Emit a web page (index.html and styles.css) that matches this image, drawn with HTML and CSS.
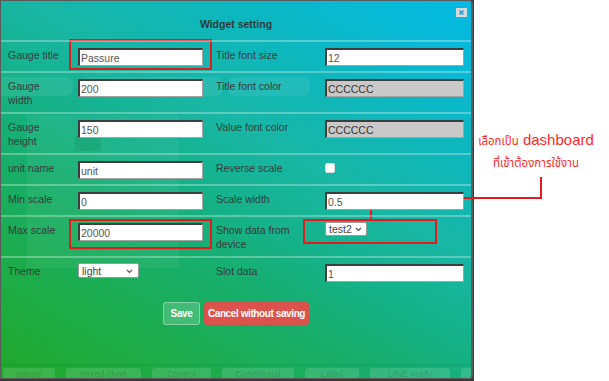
FILE: index.html
```html
<!DOCTYPE html>
<html lang="en">
<head>
    <meta charset="UTF-8">
    <meta name="viewport" content="width=device-width, initial-scale=1.0">
    <title>Widget setting</title>
    <link rel="stylesheet" href="styles.css">
</head>
<body>

<div class="page">

    <div class="shot">
        <div class="dialog">

            <!-- dashboard behind the modal, seen through it -->
            <div class="ghosts">
                <span class="g-pill g1"></span>
                <span class="g-pill g2"></span>
                <span class="g-pill g3"></span>
                <div class="g-panel">
                    <span class="g-del"></span>
                </div>
                <div class="g-bar">
                    <span class="g-btn" style="width:52px">gauge</span>
                    <span class="g-btn" style="width:75px">mixed chart</span>
                    <span class="g-btn" style="width:59px">Control</span>
                    <span class="g-btn" style="width:72px">Conditional</span>
                    <span class="g-btn" style="width:54px">Label</span>
                    <span class="g-btn" style="width:80px">LINE notify</span>
                    <span class="g-btn" style="width:40px"></span>
                </div>
            </div>

            <div class="content">
                <div class="dlg-head">
                    Widget setting
                    <span class="close">
                        <svg width="11" height="9" viewBox="0 0 11 9">
                            <path d="M3.5 2.5 L7.5 6.5 M7.5 2.5 L3.5 6.5" stroke="#2a9bd6" stroke-width="1.6"/>
                        </svg>
                    </span>
                </div>

                <div class="row">
                    <div class="lbl">Gauge title</div>
                    <div class="cell"><input class="txt short" value="Passure"></div>
                    <div class="lbl">Title font size</div>
                    <div class="cell"><input class="txt long" value="12"></div>
                </div>
                <div class="row">
                    <div class="lbl">Gauge width</div>
                    <div class="cell"><input class="txt short" value="200"></div>
                    <div class="lbl">Title font color</div>
                    <div class="cell"><input class="txt long grey" value="CCCCCC"></div>
                </div>
                <div class="row">
                    <div class="lbl">Gauge height</div>
                    <div class="cell"><input class="txt short" value="150"></div>
                    <div class="lbl">Value font color</div>
                    <div class="cell"><input class="txt long grey" value="CCCCCC"></div>
                </div>
                <div class="row">
                    <div class="lbl">unit name</div>
                    <div class="cell"><input class="txt short" value="unit"></div>
                    <div class="lbl">Reverse scale</div>
                    <div class="cell"><input type="checkbox" class="chk"></div>
                </div>
                <div class="row">
                    <div class="lbl">Min scale</div>
                    <div class="cell"><input class="txt short" value="0"></div>
                    <div class="lbl">Scale width</div>
                    <div class="cell"><input class="txt long" value="0.5"></div>
                </div>
                <div class="row">
                    <div class="lbl">Max scale</div>
                    <div class="cell"><input class="txt short" value="20000"></div>
                    <div class="lbl">Show data from device</div>
                    <div class="cell">
                        <span class="sel-wrap device">
                            <select class="sel"><option>test2</option></select>
                            <svg class="chev" width="7" height="5" viewBox="0 0 7 5"><path d="M1 1 L3.5 3.5 L6 1" fill="none" stroke="#555" stroke-width="1.2"/></svg>
                        </span>
                    </div>
                </div>
                <div class="row">
                    <div class="lbl">Theme</div>
                    <div class="cell">
                        <span class="sel-wrap theme">
                            <select class="sel"><option>light</option></select>
                            <svg class="chev" width="7" height="5" viewBox="0 0 7 5"><path d="M1 1 L3.5 3.5 L6 1" fill="none" stroke="#555" stroke-width="1.2"/></svg>
                        </span>
                    </div>
                    <div class="lbl">Slot data</div>
                    <div class="cell"><input class="txt long" value="1"></div>
                </div>

                <div class="actions">
                    <button class="btn save">Save</button>
                    <button class="btn cancel">Cancel without saving</button>
                </div>
            </div>
        </div>
    </div>

    <div class="note">
        <span class="note-th">เลือกเป็น</span> <span class="note-en">dashboard</span><br>
        <span class="note-th">ที่เข้าต้องการใช้งาน</span>
    </div>

    <!-- red marks drawn over the screenshot -->
    <span class="mark box-title"></span>
    <span class="mark box-max"></span>
    <span class="mark box-device"></span>
    <span class="mark line-a"></span>
    <span class="mark line-b"></span>
    <span class="mark line-c"></span>

</div>

</body>
</html>
```

FILE: styles.css
```css
body {
    margin: 0;
    font-family: "Liberation Sans", Arial, sans-serif;
    background-color: #fff;
}

.page {
    position: relative;
    display: flex;
    width: 609px;
    height: 381px;
    overflow: hidden;
}

/* the pasted screenshot */
.shot {
    flex: none;
    width: 474px;
    height: 381px;
    background-color: #3a3a3a;
}

.dialog {
    position: relative;
    width: 470px;
    height: 377px;
    border: 1px solid #5a5a5a;
    border-right: 2px solid #5e5e5e;
    border-radius: 0 4px 4px 0;
    overflow: hidden;
    background: linear-gradient(30deg, #20a82a 0%, #1dac4a 18%, #17ae6e 36%, #15b28c 48%, #18b6a4 60%, #0db7bd 76%, #07b9d6 90%, #04bae4 100%);
}

.content {
    position: relative;
    z-index: 1;
}

/* Ghost dashboard */
.ghosts {
    position: absolute;
    inset: 0;
    z-index: 0;
}

.g-pill {
    position: absolute;
    top: 76px;
    height: 19px;
    border-radius: 7px;
    background-color: rgba(255, 255, 255, 0.08);
}
.g1 { left: -10px; width: 82px; }
.g2 { left: 80px; width: 142px; }
.g3 { left: 227px; width: 82px; }

.g-panel {
    position: absolute;
    left: 26px;
    top: 114px;
    width: 152px;
    height: 153px;
    background-color: rgba(255, 255, 255, 0.05);
}
.g-del {
    position: absolute;
    left: 48px;
    top: 20px;
    width: 26px;
    height: 16px;
    background-color: rgba(0, 80, 20, 0.1);
}

.g-bar {
    position: absolute;
    left: 0;
    top: 363px;
    right: 0;
    height: 20px;
    border-top: 2px solid rgba(0, 0, 0, 0.05);
    display: flex;
    gap: 11px;
    padding: 2px 0 0 2px;
}
.g-btn {
    flex: none;
    height: 14px;
    border-radius: 3px;
    background-color: rgba(255, 255, 255, 0.13);
    color: rgba(0, 40, 10, 0.2);
    font-size: 9px;
    line-height: 12px;
    text-align: center;
    overflow: hidden;
}

/* Header */
.dlg-head {
    height: 39px;
    box-sizing: border-box;
    padding-top: 16px;
    text-align: center;
    font-size: 10.5px;
    line-height: 14px;
    font-weight: bold;
    color: #2e3b3b;
}

.close {
    position: absolute;
    top: 7px;
    right: 4px;
    width: 11px;
    height: 9px;
    background-color: #d6dadc;
    line-height: 0;
}

/* Form rows */
.row {
    display: grid;
    grid-template-columns: 70px 138px 109px 1fr;
    border-top: 2px solid rgba(255, 255, 255, 0.3);
}

.lbl, .cell {
    padding: 6px 7px 5px;
}

.lbl {
    font-size: 10.5px;
    line-height: 14px;
    color: #333d3b;
}

.txt {
    display: block;
    height: 18px;
    box-sizing: border-box;
    padding: 0 1px;
    margin: 0;
    border-style: solid;
    border-width: 2px 1px 1px 2px;
    border-color: #3d3d3d #a2a2a2 #a2a2a2 #3d3d3d;
    background-color: #fff;
    font-family: "Liberation Sans", Arial, sans-serif;
    font-size: 10.5px;
    color: #555;
}
.short { width: 125px; }
.long { width: 139px; }
.grey {
    background-color: #c9c9c9;
    color: #333;
}

.chk {
    display: block;
    appearance: none;
    width: 10px;
    height: 10px;
    margin: 2px 0 0;
    border: 1px solid #e2e2e2;
    border-radius: 2px;
    background-color: #fff;
}

.sel-wrap {
    position: relative;
    display: block;
    margin-top: -1px;
}
.sel-wrap.device { width: 42px; height: 14px; }
.sel-wrap.theme { width: 61px; height: 15px; }

.sel {
    display: block;
    appearance: none;
    width: 100%;
    height: 100%;
    margin: 0;
    padding: 0 0 0 3px;
    border: 1px solid #9a9a9a;
    border-radius: 2px;
    background-color: #fff;
    font-family: "Liberation Sans", Arial, sans-serif;
    font-size: 10.5px;
    color: #444;
}

.chev {
    position: absolute;
    right: 6px;
    top: 50%;
    margin-top: -2px;
}
.device .chev { right: 5px; }

/* Buttons */
.actions {
    display: flex;
    justify-content: center;
    gap: 4px;
    padding-top: 15px;
}

.btn {
    height: 23px;
    padding: 0;
    border-radius: 3px;
    font-family: "Liberation Sans", Arial, sans-serif;
    font-size: 10px;
    letter-spacing: -0.4px;
    white-space: nowrap;
    font-weight: bold;
    color: #fff;
    cursor: pointer;
}
.save {
    width: 37px;
    border: 1px solid rgba(255, 255, 255, 0.35);
    background-color: rgba(255, 255, 255, 0.18);
}
.cancel {
    width: 105px;
    border: 1px solid #d4504b;
    background-color: #dc534e;
}

/* Annotation */
.note {
    width: 124px;
    padding-top: 130px;
    text-align: center;
    color: #ff2a2a;
    font-family: "Noto Sans Thai", "Leelawadee UI", Tahoma, "DejaVu Sans", sans-serif;
    line-height: 20px;
}
.note-th { font-size: 11.5px; }
.note-en {
    font-family: "Liberation Sans", Arial, sans-serif;
    font-size: 15px;
}

.mark {
    position: absolute;
    box-sizing: border-box;
}
.box-title, .box-max, .box-device {
    border: 2px solid #e31b1f;
}
.box-title { left: 69px; top: 39px; width: 143px; height: 31px; }
.box-max { left: 69px; top: 219px; width: 143px; height: 30px; }
.box-device { left: 303px; top: 219px; width: 134px; height: 25px; }
.line-a { left: 370px; top: 197px; width: 2px; height: 23px; background-color: #e31b1f; }
.line-b { left: 370px; top: 197px; width: 172px; height: 2px; background-color: #e31b1f; }
.line-c { left: 540px; top: 177px; width: 2px; height: 22px; background-color: #e31b1f; }
```
